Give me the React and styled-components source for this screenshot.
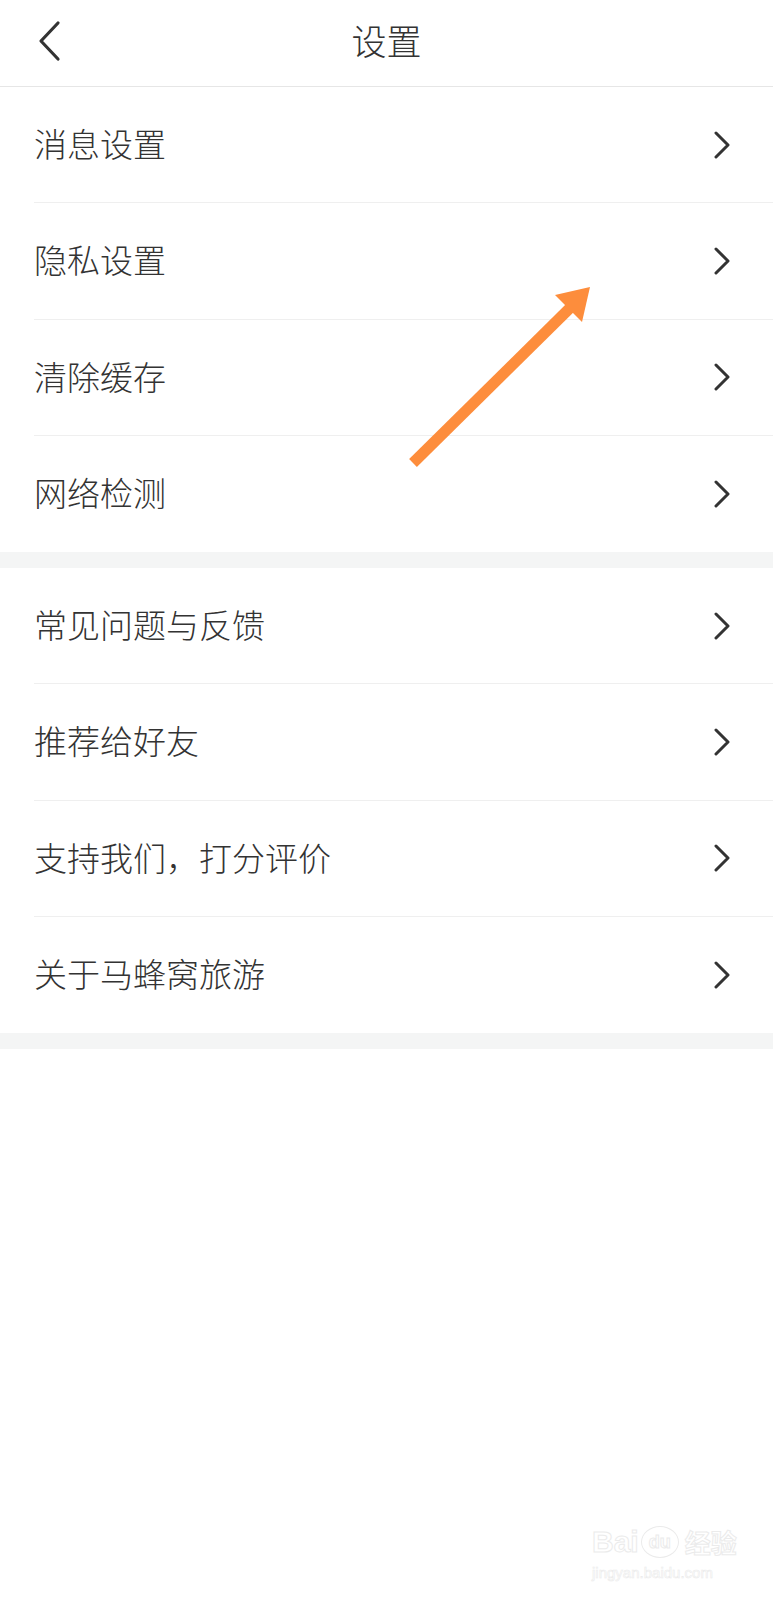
import React from 'react';
import styled, { createGlobalStyle } from 'styled-components';

const GlobalStyle = createGlobalStyle`
  html, body {
    margin: 0;
    padding: 0;
    background: #ffffff;
  }
  body {
    font-family: "Noto Sans CJK SC", "Noto Sans", sans-serif;
    color: #333333;
  }
`;

const Page = styled.div`
  position: relative;
  width: 773px;
  min-height: 1600px;
  background: #ffffff;
`;

const Header = styled.header`
  display: flex;
  align-items: center;
  justify-content: center;
  position: relative;
  box-sizing: border-box;
  height: 87px;
  padding-bottom: 8px;
  border-bottom: 1px solid #e6e6e6;
`;

const BackButton = styled.button`
  position: absolute;
  left: 32px;
  top: 18px;
  width: 34px;
  height: 46px;
  padding: 0;
  border: none;
  background: none;
  display: flex;
  align-items: center;
  justify-content: center;
`;

const Title = styled.h1`
  margin: 0;
  font-size: 35px;
  font-weight: 300;
  color: #333333;
  letter-spacing: 0;
`;

const Section = styled.section`
  background: #ffffff;
`;

const Gap = styled.div`
  height: 16px;
  background: #f4f5f5;
`;

const Row = styled.div`
  display: flex;
  align-items: center;
  justify-content: space-between;
  box-sizing: border-box;
  height: 116.25px;
  margin-left: 34px;
  padding-right: 42px;
  border-bottom: ${(p) => (p.last ? 'none' : '1px solid #efefef')};
`;

const Label = styled.span`
  font-size: 33px;
  font-weight: 300;
  color: #333333;
  line-height: 1;
  padding-bottom: 2px;
`;

const Arrow = styled.svg`
  position: absolute;
  left: 400px;
  top: 275px;
  pointer-events: none;
`;

const Watermark = styled.div`
  position: absolute;
  left: 592px;
  top: 1526px;
  display: flex;
  flex-direction: column;
  align-items: flex-start;
  color: transparent;
  -webkit-text-stroke: 1px #ebebeb;
  font-family: "Liberation Sans", Arial, sans-serif;
`;

const WatermarkTop = styled.div`
  display: flex;
  align-items: center;
  gap: 2px;
  font-size: 30px;
  font-weight: 700;
  line-height: 1;
`;

const PawCircle = styled.span`
  display: inline-flex;
  align-items: center;
  justify-content: center;
  width: 36px;
  height: 30px;
  border: 1px solid #ebebeb;
  border-radius: 50%;
  font-size: 18px;
`;

const WatermarkCJK = styled.span`
  font-family: "Noto Sans CJK SC", sans-serif;
  font-size: 26px;
  margin-left: 4px;
`;

const WatermarkUrl = styled.div`
  font-size: 15px;
  margin-top: 6px;
  -webkit-text-stroke: 0.6px #ebebeb;
`;

const Chevron = () => (
  <svg width="18" height="28" viewBox="0 0 18 28">
    <polyline
      points="3,2 15,14 3,26"
      fill="none"
      stroke="#333333"
      strokeWidth="3"
      strokeLinecap="round"
      strokeLinejoin="round"
    />
  </svg>
);

const groups = [
  ['消息设置', '隐私设置', '清除缓存', '网络检测'],
  ['常见问题与反馈', '推荐给好友', '支持我们，打分评价', '关于马蜂窝旅游'],
];

export default function App() {
  return (
    <Page>
      <GlobalStyle />
      <Header>
        <BackButton aria-label="返回">
          <svg width="26" height="42" viewBox="0 0 26 42">
            <polyline
              points="22,3 5,21 22,39"
              fill="none"
              stroke="#333333"
              strokeWidth="3.2"
              strokeLinecap="round"
              strokeLinejoin="round"
            />
          </svg>
        </BackButton>
        <Title>设置</Title>
      </Header>

      {groups.map((items, gi) => (
        <React.Fragment key={gi}>
          <Section>
            {items.map((label, i) => (
              <Row key={label} last={i === items.length - 1}>
                <Label>{label}</Label>
                <Chevron />
              </Row>
            ))}
          </Section>
          <Gap />
        </React.Fragment>
      ))}

      <Arrow width="200" height="200" viewBox="0 0 200 200">
        <line x1="13" y1="188" x2="172" y2="31" stroke="#fd8d3c" strokeWidth="11" />
        <polygon points="190,12 182,47 155,20" fill="#fd8d3c" />
      </Arrow>

      <Watermark>
        <WatermarkTop>
          <span>Bai</span>
          <PawCircle>du</PawCircle>
          <WatermarkCJK>经验</WatermarkCJK>
        </WatermarkTop>
        <WatermarkUrl>jingyan.baidu.com</WatermarkUrl>
      </Watermark>
    </Page>
  );
}
